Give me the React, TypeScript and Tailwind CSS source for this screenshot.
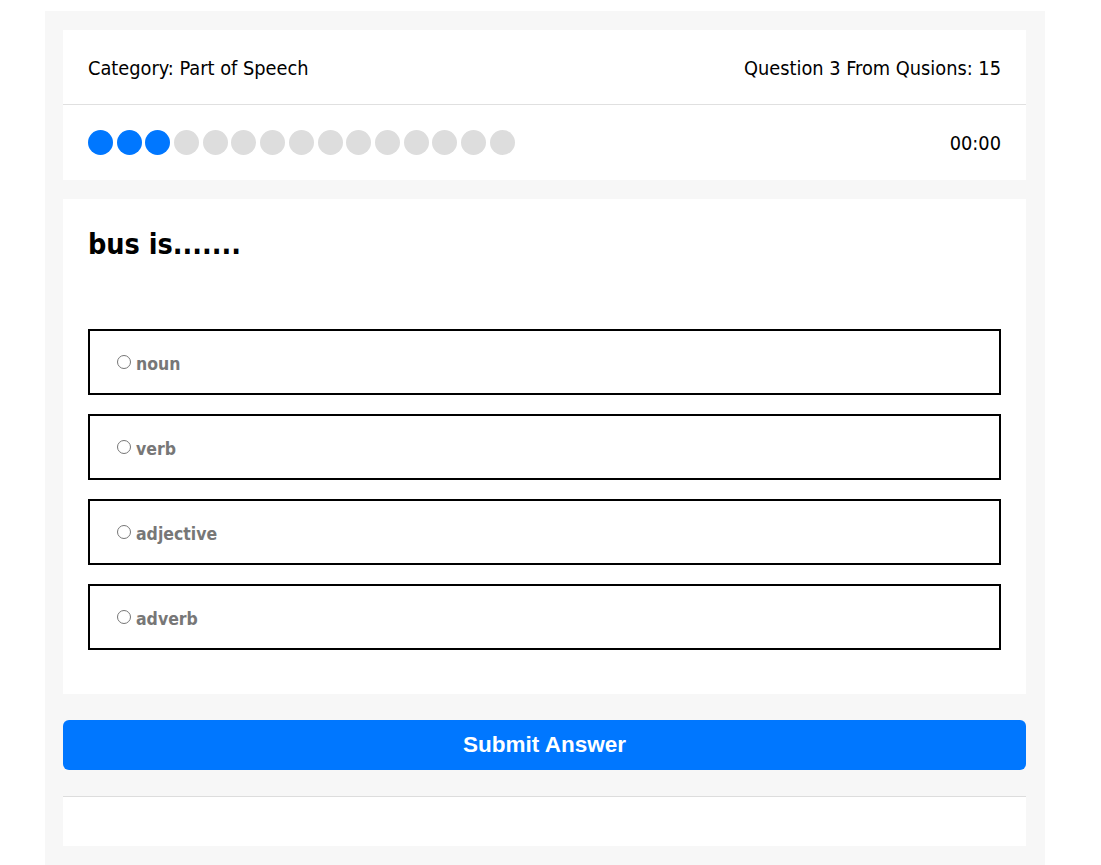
import React from 'react';

const Quiz = () => {
  const total = 15;
  const current = 3;
  const options = ['noun', 'verb', 'adjective', 'adverb'];

  return (
    <div className="min-h-screen bg-white pt-[11px]">
      <div
        className="ml-[45px] w-[1000px] bg-[#f7f7f7] pl-[18px] pr-[19px] pt-[19px] pb-[19px] text-black"
        style={{ fontFamily: "'DejaVu Sans Condensed', 'DejaVu Sans', sans-serif" }}
      >
        {/* Header card */}
        <div className="bg-white">
          <div className="flex h-[75px] items-center justify-between border-b border-[#e0e0e0] pl-[25px] pr-[25px] pt-[3px] text-[19.8px]">
            <span>Category: Part of Speech</span>
            <span>Question 3 From Qusions: 15</span>
          </div>
          <div className="flex h-[75px] items-center justify-between pl-[25px] pr-[25px]">
            <div className="flex gap-[3.7px]">
              {Array.from({ length: total }).map((_, i) => (
                <div
                  key={i}
                  className={`h-[25px] w-[25px] rounded-full ${i < current ? 'bg-[#0077ff]' : 'bg-[#dddddd]'}`}
                ></div>
              ))}
            </div>
            <span className="pt-[2px] text-[19.8px]">00:00</span>
          </div>
        </div>

        {/* Question card */}
        <div className="mt-[19px] bg-white px-[25px] pt-[26px] pb-[44px]">
          <h2 className="mb-[64px] text-[28.5px] font-bold leading-[40px]">bus is.......</h2>
          <div className="flex flex-col gap-[19px]">
            {options.map((opt) => (
              <label
                key={opt}
                className="flex h-[66px] w-[913px] cursor-pointer items-center border-2 border-black pl-[27px] pt-[4px]"
              >
                <input type="radio" name="answer" className="mr-[5px] h-[14px] w-[14px] -translate-y-[2px]" />
                <span className="text-[17.5px] font-bold text-[#777777]">{opt}</span>
              </label>
            ))}
          </div>
        </div>

        {/* Submit */}
        <button
          className="mt-[26px] flex h-[50px] w-full items-center justify-center rounded-[6px] bg-[#0077ff] text-[22.5px] font-bold text-white"
          style={{ fontFamily: "'Liberation Sans', Arial, sans-serif" }}
        >
          Submit Answer
        </button>

        {/* Footer */}
        <div className="mt-[26px] h-[50px] border-t border-[#dddddd] bg-white"></div>
      </div>
    </div>
  );
};

export default function App() {
  return <Quiz />;
}
